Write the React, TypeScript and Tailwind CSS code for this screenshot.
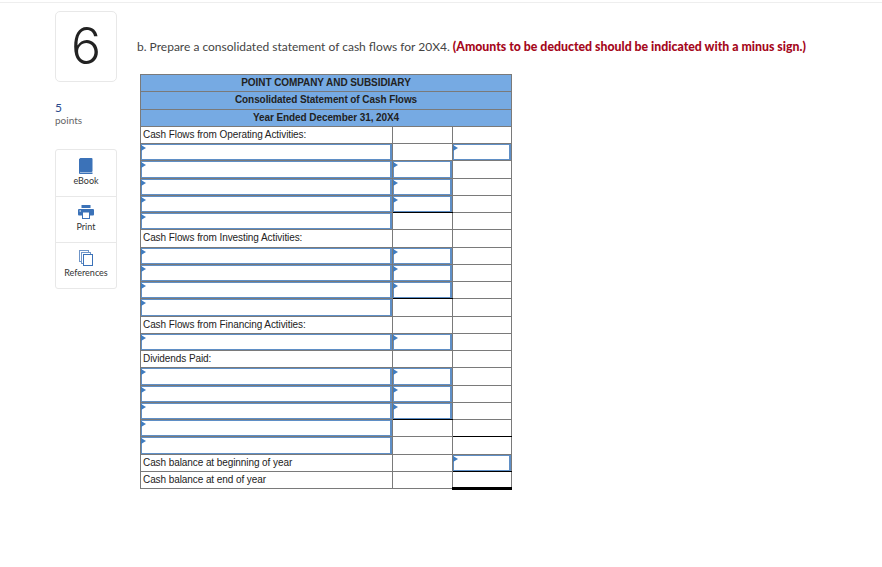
const blue = 'input'
const none = ''

interface Row {
    label?: string
    cells: string[]
}

// cell kinds: input = blue entry box, line = black top rule, end = top rule and thick bottom rule
const rows: Row[] = [
    { label: 'Cash Flows from Operating Activities:', cells: [none, none, none] },
    { cells: [blue, none, blue] },
    { cells: [blue, blue, none] },
    { cells: [blue, blue, none] },
    { cells: [blue, blue, none] },
    { cells: [blue, 'line', none] },
    { label: 'Cash Flows from Investing Activities:', cells: [none, none, none] },
    { cells: [blue, blue, none] },
    { cells: [blue, blue, none] },
    { cells: [blue, blue, none] },
    { cells: [blue, 'line', none] },
    { label: 'Cash Flows from Financing Activities:', cells: [none, none, none] },
    { cells: [blue, blue, none] },
    { label: 'Dividends Paid:', cells: [none, none, none] },
    { cells: [blue, blue, none] },
    { cells: [blue, blue, none] },
    { cells: [blue, blue, none] },
    { cells: [blue, 'line', none] },
    { cells: [blue, none, 'line'] },
    { label: 'Cash balance at beginning of year', cells: [none, none, blue] },
    { label: 'Cash balance at end of year', cells: [none, none, 'end'] },
]

function EntryBox() {
    return (
        <div className="relative h-full w-full border border-r-2 border-[#5f8fc6] bg-white">
            <svg className="absolute left-[-1px] top-0" width="5" height="6" viewBox="0 0 5 6">
                <path d="M0 0 L5 3 L0 6 Z" fill="#3f7cc0" />
            </svg>
        </div>
    )
}

function BookIcon() {
    return (
        <svg width="14" height="16" viewBox="0 0 14 16">
            <rect x="0.5" y="0" width="13" height="14" rx="1" fill="#3b72b8" />
            <path d="M1 14.5 H13.5" stroke="#9db9dc" strokeWidth="1" />
            <path d="M0.5 1 V15.5 H13.5" fill="none" stroke="#3b72b8" strokeWidth="1" />
        </svg>
    )
}

function PrintIcon() {
    return (
        <svg width="16" height="14" viewBox="0 0 16 14">
            <rect x="3.5" y="0" width="9" height="3" fill="#3b72b8" />
            <rect x="0" y="4" width="16" height="6.5" rx="1" fill="#3b72b8" />
            <rect x="4.5" y="7" width="7" height="6.5" fill="#fff" stroke="#3b72b8" strokeWidth="1" />
            <rect x="1.5" y="5.5" width="1.5" height="1" fill="#fff" />
        </svg>
    )
}

function RefsIcon() {
    return (
        <svg width="14" height="16" viewBox="0 0 14 16">
            <rect x="0.5" y="0.5" width="9" height="11" fill="#fff" stroke="#6f95c8" />
            <rect x="2.5" y="2.5" width="9" height="11" fill="#fff" stroke="#6f95c8" />
            <rect x="4.5" y="4.5" width="9" height="11" fill="#fff" stroke="#3b72b8" />
        </svg>
    )
}

export default function App() {
    return (
        <div className="h-[567px] w-[882px] overflow-hidden bg-white font-['Lato',sans-serif]">
            <div className="h-[3px] border-b border-[#eeeeee]" />
            <div className="flex pl-[55px] pt-2">
                {/* Sidebar */}
                <div className="w-[62px] shrink-0">
                    <div className="flex h-[71px] items-center justify-center rounded-[5px] border border-[#e8e8e8] font-['Inter',sans-serif] text-[50px] font-light text-[#222]">
                        6
                    </div>
                    <div className="mt-[19px] text-[12px] leading-[13px] text-[#2b4a8c]">5</div>
                    <div className="text-[10px] leading-[13px] text-[#666]">points</div>
                    <div className="mt-[22px] rounded-[3px] border border-[#e8e8e8]">
                        <div className="flex h-[46px] flex-col items-center justify-end pb-[9px] text-[9px] leading-[12px] text-[#333]">
                            <BookIcon />
                            <span className="mt-[1px]">eBook</span>
                        </div>
                        <div className="flex h-[46px] flex-col items-center justify-end border-t border-[#e8e8e8] pb-[9px] text-[9px] leading-[12px] text-[#333]">
                            <PrintIcon />
                            <span className="mt-[2px]">Print</span>
                        </div>
                        <div className="flex h-[46px] flex-col items-center justify-end border-t border-[#e8e8e8] pb-[9px] text-[9px] leading-[12px] text-[#333]">
                            <RefsIcon />
                            <span className="mt-[1px]">References</span>
                        </div>
                    </div>
                </div>

                {/* Main */}
                <div className="ml-[20px] flex-1 pr-[20px]">
                    <p className="mt-[28px] whitespace-nowrap text-[12px] leading-[16px] text-[#444]">
                        b. Prepare a consolidated statement of cash flows for 20X4.{' '}
                        <strong className="text-[12.3px] font-black text-[#a5071b]">
                            (Amounts to be deducted should be indicated with a minus sign.)
                        </strong>
                    </p>

                    <table className="ml-[3px] mt-[19px] w-[371px] table-fixed border-collapse font-['Liberation_Sans',sans-serif] text-[10px] tracking-[-0.08px] text-[#222]">
                        <colgroup>
                            <col className="w-[252px]" />
                            <col className="w-[60px]" />
                            <col className="w-[59px]" />
                        </colgroup>
                        <tbody>
                            {['POINT COMPANY AND SUBSIDIARY', 'Consolidated Statement of Cash Flows', 'Year Ended December 31, 20X4'].map((title) => (
                                <tr key={title} className="h-[17.25px]">
                                    <td colSpan={3} className="border border-[#7a7a7a] bg-[#76aae3] p-0 text-center font-bold leading-none">
                                        {title}
                                    </td>
                                </tr>
                            ))}
                            {rows.map((row, i) => (
                                <tr key={i} className="h-[17.25px]">
                                    {row.cells.map((cell, j) => {
                                        const next = rows[i + 1]?.cells[j]
                                        const ruled = next === 'line' || next === 'end'
                                        return (
                                            <td
                                                key={j}
                                                className={`h-[17.25px] border border-[#7a7a7a] p-0 leading-none ${
                                                    ruled ? 'border-b-black' : ''
                                                } ${cell === 'end' ? 'border-b-[3px] border-b-black' : ''}`}
                                            >
                                                {cell === blue && <EntryBox />}
                                                {j === 0 && row.label && <span className="pl-[2px]">{row.label}</span>}
                                            </td>
                                        )
                                    })}
                                </tr>
                            ))}
                        </tbody>
                    </table>
                </div>
            </div>
        </div>
    )
}
